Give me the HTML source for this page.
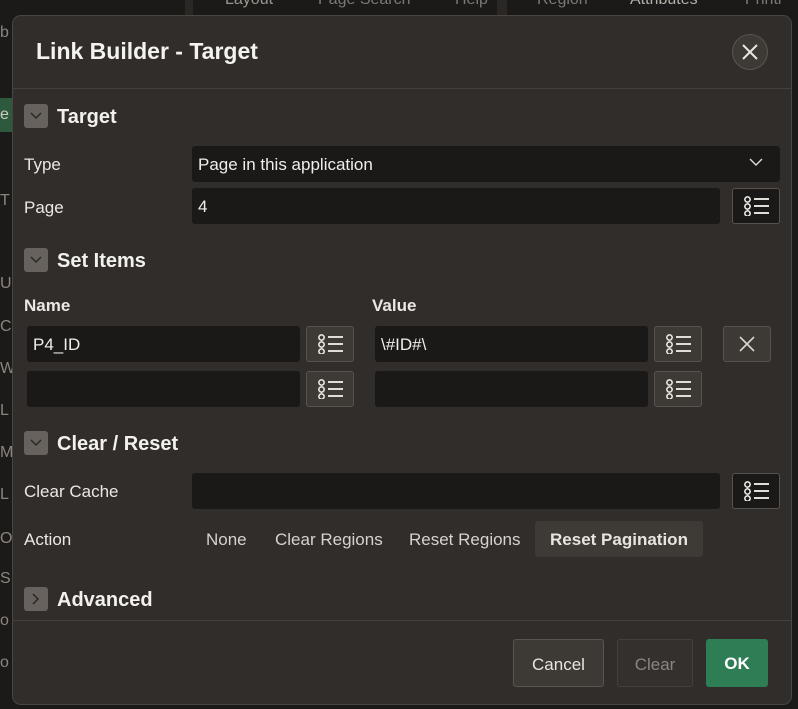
<!DOCTYPE html>
<html><head><meta charset="utf-8">
<style>
*{box-sizing:border-box;margin:0;padding:0}
body{width:798px;height:709px;background:#1c1a19;font-family:"Liberation Sans",sans-serif;color:#e8e6e3;position:relative;overflow:hidden}
.a{position:absolute}
.bgtxt{position:absolute;color:#8a8580;font-size:16px}
.dlg{position:absolute;left:12px;top:15px;width:780px;height:690px;background:#312d2a;border:1px solid #4a4541;border-radius:9px}
.inp{position:absolute;background:#1a1918;border-radius:3px;height:36px;font-size:17px;color:#f0eeeb;padding-left:6px;line-height:38px}
.lb{position:absolute;font-size:17px;color:#ebe8e4}
.tog{position:absolute;left:24px;width:24px;height:24px;background:#67625e;border-radius:3px}
.sec{position:absolute;left:57px;font-size:20px;font-weight:bold;color:#f3f1ee}
.btnd{position:absolute;width:48px;height:36px;border:1px solid #57524d;border-radius:3px;background:#1a1918}
.btnl{position:absolute;width:48px;height:36px;border:1px solid #57524d;border-radius:3px;background:#3d3935}
.btnx{position:absolute;width:48px;height:36px;border:1px solid #57524d;border-radius:3px;background:#3d3935}
.pill{position:absolute;top:521px;height:36px;line-height:38px;font-size:17px;color:#d6d2ce}
.fb{position:absolute;top:639px;height:48px;line-height:49px;text-align:center;font-size:17px;border-radius:3px}
.btnd::after,.btnl::after{content:"";position:absolute;left:11px;top:7px;width:26px;height:20px;background:
radial-gradient(circle at 3.5px 3.5px,transparent 1.7px,#e0ddd9 1.9px,#e0ddd9 3.3px,transparent 3.5px) 0 0/7px 7px repeat-y,
linear-gradient(#e0ddd9,#e0ddd9) 10px 2px/15px 2px no-repeat,
linear-gradient(#e0ddd9,#e0ddd9) 10px 9px/15px 2px no-repeat,
linear-gradient(#e0ddd9,#e0ddd9) 10px 16px/15px 2px no-repeat}
</style></head><body>
<div class="a" style="left:185px;top:0;width:8px;height:15px;background:#2a2725"></div>
<div class="a" style="left:497px;top:0;width:10px;height:15px;background:#2a2725"></div>
<div class="bgtxt" style="left:225px;top:-9px;color:#9a958f">Layout</div>
<div class="bgtxt" style="left:318px;top:-9px;color:#7d7873">Page Search</div>
<div class="bgtxt" style="left:455px;top:-9px;color:#7d7873">Help</div>
<div class="bgtxt" style="left:537px;top:-9px;color:#7d7873">Region</div>
<div class="bgtxt" style="left:630px;top:-9px;color:#b5b0aa">Attributes</div>
<div class="bgtxt" style="left:745px;top:-9px;color:#7d7873">Printi</div>
<div class="a" style="left:0;top:98px;width:12px;height:34px;background:#2d5a3d"></div>
<div class="bgtxt" style="left:0;top:24px">b</div>
<div class="bgtxt" style="left:0;top:106px;color:#cfcac5">e</div>
<div class="bgtxt" style="left:0;top:192px">T</div>
<div class="bgtxt" style="left:0;top:275px">U</div>
<div class="bgtxt" style="left:0;top:318px">C</div>
<div class="bgtxt" style="left:0;top:360px">W</div>
<div class="bgtxt" style="left:0;top:402px">L</div>
<div class="bgtxt" style="left:0;top:444px">M</div>
<div class="bgtxt" style="left:0;top:486px">L</div>
<div class="bgtxt" style="left:0;top:530px">O</div>
<div class="bgtxt" style="left:0;top:570px">S</div>
<div class="bgtxt" style="left:0;top:612px">o</div>
<div class="bgtxt" style="left:0;top:654px">o</div>

<div class="dlg"></div>
<div class="a" style="left:36px;top:38px;font-size:23px;font-weight:bold;color:#f5f3f0">Link Builder - Target</div>
<div class="a" style="left:732px;top:34px;width:36px;height:36px;border-radius:50%;background:#3d3935;border:1px solid #5a5550"></div>
<svg class="a" style="left:741px;top:43px" width="18" height="18"><path d="M2 2L16 16M16 2L2 16" stroke="#e8e5e1" stroke-width="2"/></svg>
<div class="a" style="left:13px;top:88px;width:778px;height:1px;background:#45403c"></div>

<div class="tog" style="top:104px"></div>
<svg class="a" style="left:30px;top:112px" width="12" height="8"><path d="M1 1L6 6L11 1" stroke="#2a2725" stroke-width="1.5" fill="none"/></svg>
<div class="sec" style="top:106px">Target</div>
<div class="lb" style="left:24px;top:155px">Type</div>
<div class="inp" style="left:192px;top:146px;width:588px">Page in this application</div>
<svg class="a" style="left:749px;top:158px" width="14" height="9"><path d="M1 1L7 7L13 1" stroke="#ddd" stroke-width="1.4" fill="none"/></svg>
<div class="lb" style="left:24px;top:198px">Page</div>
<div class="inp" style="left:192px;top:188px;width:528px">4</div>
<div class="btnd" style="left:732px;top:188px"></div>

<div class="tog" style="top:248px"></div>
<svg class="a" style="left:30px;top:256px" width="12" height="8"><path d="M1 1L6 6L11 1" stroke="#2a2725" stroke-width="1.5" fill="none"/></svg>
<div class="sec" style="top:250px">Set Items</div>
<div class="lb" style="left:24px;top:296px;font-weight:bold">Name</div>
<div class="lb" style="left:372px;top:296px;font-weight:bold">Value</div>
<div class="inp" style="left:27px;top:326px;width:273px">P4_ID</div>
<div class="btnl" style="left:306px;top:326px"></div>
<div class="inp" style="left:375px;top:326px;width:273px">\#ID#\</div>
<div class="btnl" style="left:654px;top:326px"></div>
<div class="btnx" style="left:723px;top:326px"></div>
<svg class="a" style="left:739px;top:336px" width="16" height="16"><path d="M1 1L15 15M15 1L1 15" stroke="#d8d4d0" stroke-width="1.6"/></svg>
<div class="inp" style="left:27px;top:371px;width:273px"></div>
<div class="btnl" style="left:306px;top:371px"></div>
<div class="inp" style="left:375px;top:371px;width:273px"></div>
<div class="btnl" style="left:654px;top:371px"></div>

<div class="tog" style="top:431px"></div>
<svg class="a" style="left:30px;top:439px" width="12" height="8"><path d="M1 1L6 6L11 1" stroke="#2a2725" stroke-width="1.5" fill="none"/></svg>
<div class="sec" style="top:433px">Clear / Reset</div>
<div class="lb" style="left:24px;top:482px">Clear Cache</div>
<div class="inp" style="left:192px;top:473px;width:528px"></div>
<div class="btnd" style="left:732px;top:473px"></div>
<div class="lb" style="left:24px;top:530px">Action</div>
<div class="pill" style="left:206px">None</div>
<div class="pill" style="left:275px">Clear Regions</div>
<div class="pill" style="left:409px">Reset Regions</div>
<div class="pill" style="left:535px;width:168px;background:#3e3a36;border-radius:3px;text-align:center;font-weight:bold;color:#e8e5e1">Reset Pagination</div>

<div class="tog" style="top:587px"></div>
<svg class="a" style="left:32px;top:593px" width="8" height="12"><path d="M1 1L6 6L1 11" stroke="#2a2725" stroke-width="1.5" fill="none"/></svg>
<div class="sec" style="top:589px">Advanced</div>
<div class="a" style="left:13px;top:620px;width:778px;height:1px;background:#45403c"></div>

<div class="fb" style="left:513px;width:91px;background:#3d3935;border:1px solid #5a5550;color:#e8e5e1">Cancel</div>
<div class="fb" style="left:617px;width:76px;background:#34302d;border:1px solid #45403c;color:#8a8580">Clear</div>
<div class="fb" style="left:706px;width:62px;background:#2f7d55;color:#fff;font-weight:bold">OK</div>
</body></html>
